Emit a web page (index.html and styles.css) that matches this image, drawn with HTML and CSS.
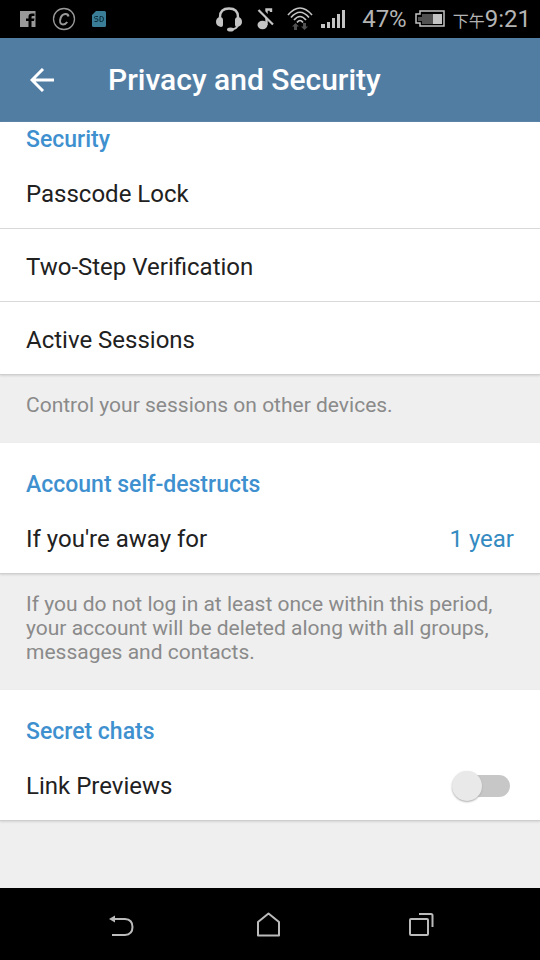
FILE: index.html
```html
<!DOCTYPE html>
<html lang="en">
<head>
<meta charset="utf-8">
<meta name="viewport" content="width=device-width, initial-scale=1">
<title>Privacy and Security</title>
<link rel="stylesheet" href="styles.css">
</head>
<body>
<div class="status">
  <div class="status-left">
    <svg width="16" height="16" viewBox="0 0 16 16"><path fill="#999" d="M0 0h15.500v16H11.500v-6H14l.5-2.500h-3V6q0-1 1-1h2V2.500h-2.500Q8.500 2.500 8.500 5.500v2H6V10h2.500v6H0z"/></svg>
    <svg width="24" height="24" viewBox="0 0 24 24" fill="none" stroke="#999"><circle cx="12" cy="12" r="10.500" stroke-width="1.300"/><path stroke-width="2" d="M16.500 9.500C16 6 10.500 6.300 8.800 10.500 7 15 8.500 17.500 11 17.500q2.500 0 4.200-2.500"/></svg>
    <svg width="14" height="16" viewBox="0 0 14 16"><path fill="#3a7d96" d="M4 0h8.500Q14 0 14 1.500v13q0 1.500-1.500 1.500h-11Q0 16 0 14.500V4z"/><path fill="none" stroke="#0b2e3c" d="M6 5.500H3.500Q2.500 5.500 2.500 6.500T3.500 7.800H5Q6 7.800 6 9T5 10.500H2.500M8 5.500v5h1.500q2 0 2-2.500t-2-2.500z"/></svg>
  </div>
  <div class="status-right">
    <svg width="26" height="25" viewBox="0 0 26 25"><path fill="none" stroke="#c4c4c4" stroke-width="2.400" d="M4 12V10Q4 1.500 13 1.500T22 10v2"/><path fill="#c4c4c4" d="M3.500 10Q7 10 7 13v5q0 2-2 2-5-1-5-5t3.500-5zM22.500 10Q19 10 19 13v5q0 2 2 2 5-1 5-5t-3.500-5z"/><path fill="none" stroke="#c4c4c4" stroke-width="1.800" d="M22 18q-1 4-6 4.300"/><ellipse cx="14.500" cy="22.500" rx="3.500" ry="2" fill="#c4c4c4"/></svg>
    <svg class="note" width="18" height="22" viewBox="0 0 18 22"><path fill="none" stroke="#c4c4c4" stroke-width="2.400" d="M9.500 17V1.500H14v2.500"/><ellipse cx="5.500" cy="17" rx="5" ry="4.200" fill="#c4c4c4"/><path stroke="#000" stroke-width="4" d="m3 1 14 14"/><path stroke="#c4c4c4" stroke-width="2.200" d="m1.500 2 14.500 14.500"/></svg>
    <svg class="wifi" width="26" height="24" viewBox="0 0 26 24"><g fill="none" stroke="#c4c4c4" stroke-width="1.700"><path d="M1 8Q13-6 25 8M4 10.500Q13 0 22 10.500M7 13q6-7 12 0M10 15.500q3-4 6 0"/></g><path fill="#505050" d="m8.500 16 3.500 3.500h-2V23H7v-3.500H5zM17.500 23 14 19.500h2V16h3v3.500h2z"/></svg>
    <svg width="25" height="19" viewBox="0 0 25 19"><path fill="#c4c4c4" d="M0 14h4v4H0zM6 12h3v6H6zM11 8h3v10h-3zM16 4h3v14h-3zM21 0h3v18h-3z"/></svg>
    <span class="percent">47%</span>
    <svg width="30" height="18" viewBox="0 0 30 18"><path fill="none" stroke="#c4c4c4" stroke-width="1.500" d="M5 1h24v15H5v-3H1V4h4z"/><path fill="#505050" d="M7 4h11v10H7v-3H3V7h4z"/><path fill="#c4c4c4" d="M18 4h9v10h-9z"/></svg>
    <span class="clock"><span class="period" lang="zh-TW">下午</span>9:21</span>
  </div>
</div>
<header class="appbar">
  <button class="back" aria-label="Back"><svg width="24" height="24" viewBox="0 0 24 24" fill="none" stroke="#fff" stroke-width="3"><path d="M24 12H2M13 1 2 12l11 11"/></svg></button>
  <h1>Privacy and Security</h1>
</header>
<main>
  <section class="card">
    <h2 class="first">Security</h2>
    <button class="row">Passcode Lock</button>
    <button class="row">Two-Step Verification</button>
    <button class="row">Active Sessions</button>
  </section>
  <p class="info">Control your sessions on other devices.</p>
  <section class="card">
    <h2>Account self-destructs</h2>
    <button class="row">If you're away for<span class="value">1 year</span></button>
  </section>
  <p class="info">If you do not log in at least once within this period, your account will be deleted along with all groups, messages and contacts.</p>
  <section class="card">
    <h2>Secret chats</h2>
    <label class="row">Link Previews<input class="switch" type="checkbox" role="switch"></label>
  </section>
</main>
<nav class="nav">
  <button aria-label="Back"><svg width="28" height="28" viewBox="0 0 28 28"><path fill="none" stroke="#bbb" stroke-width="2" d="M4 7h13q7.500.500 7.500 8T17 23H4"/><path fill="#bbb" d="M1 7l6-3.500v7z"/></svg></button>
  <button aria-label="Home"><svg width="28" height="28" viewBox="0 0 28 28" fill="none" stroke="#bbb" stroke-width="2" stroke-linejoin="round"><path d="M4 10 14.500 1.500 25 10v13.500H4z"/></svg></button>
  <button aria-label="Recent apps"><svg width="28" height="28" viewBox="0 0 28 28" fill="none" stroke="#bbb" stroke-width="2"><rect x="3" y="7" width="18" height="16" rx="1"/><path d="M12 2h12q1.500 0 1.500 1.500V15"/></svg></button>
</nav>
</body>
</html>
```
FILE: styles.css
```css
* { box-sizing: border-box; }
body {
  margin: 0;
  min-height: 100vh;
  display: flex;
  flex-direction: column;
  background: #efefef;
  color: #212121;
  font-family: Roboto, "Noto Sans CJK TC", sans-serif;
}
button {
  border: 0;
  padding: 0;
  background: none;
  color: inherit;
  font: inherit;
  text-align: left;
}
svg { display: block; flex: none; }
h1, h2, p { margin: 0; }

.status {
  display: flex;
  justify-content: space-between;
  align-items: center;
  height: 38px;
  padding: 0 9px 0 20px;
  background: #000;
  color: #b4b4b4;
}
.status-left, .status-right { display: flex; align-items: center; }
.status-left { gap: 16px; }
.status-right { gap: 8px; }
.note { margin-left: 7px; }
.wifi { margin-left: 4px; }
.percent { margin-left: 8px; font-size: 24px; }
.clock { font-size: 24px; white-space: nowrap; }
.period { font-size: 16px; }

.appbar {
  display: flex;
  align-items: center;
  gap: 54px;
  height: 84px;
  padding: 0 30px;
  background: #527da3;
  color: #fff;
}
.appbar h1 { font-size: 30px; font-weight: 500; line-height: 36px; }

main { flex: 1; }
.card {
  background: #fff;
  border-bottom: 1px solid #cfcfcf;
  box-shadow: 0 1px 2px #d4d4d4;
}
.card h2 {
  padding: 29px 26px 3px;
  color: #3e90cf;
  font-size: 23px;
  font-weight: 500;
  line-height: 26px;
}
.card .first { padding-top: 5px; }
.row {
  display: flex;
  justify-content: space-between;
  align-items: center;
  width: 100%;
  height: 72px;
  padding: 3px 26px 0;
  font-size: 24px;
}
.row + .row { height: 73px; border-top: 1px solid #d9d9d9; }
.value { color: #348bc1; }
.info {
  padding: 18px 26px 26px;
  color: #8a8a8a;
  font-size: 21px;
  line-height: 24px;
}

.switch {
  appearance: none;
  display: flex;
  align-items: center;
  width: 56px;
  height: 22px;
  margin: 0 4px 0 0;
  border-radius: 11px;
  background: linear-gradient(#c7c7c7, #c7c7c7) right / 44px 100% no-repeat;
}
.switch::before {
  content: "";
  width: 30px;
  height: 30px;
  margin-left: -2px;
  flex: none;
  border-radius: 50%;
  background: #e9e9e9;
  box-shadow: 0 1px 2px #aaa;
}
.switch:checked { background-color: #b0d4ee; }

.nav {
  display: flex;
  justify-content: space-between;
  align-items: center;
  height: 72px;
  padding: 4px 105px 0 108px;
  background: #000;
}
.nav button:nth-child(2) { margin-right: 8px; }
```
